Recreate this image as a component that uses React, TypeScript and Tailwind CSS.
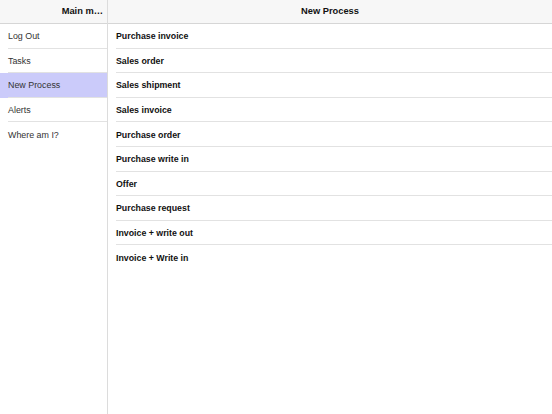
import React from "react";

const left = ["Log Out", "Tasks", "New Process", "Alerts", "Where am I?"];
const right = [
  "Purchase invoice",
  "Sales order",
  "Sales shipment",
  "Sales invoice",
  "Purchase order",
  "Purchase write in",
  "Offer",
  "Purchase request",
  "Invoice + write out",
  "Invoice + Write in",
];

export default function App() {
  return (
    <div
      className="flex h-[414px] w-[552px] overflow-hidden bg-white"
      style={{ fontFamily: '"Liberation Sans", Arial, sans-serif' }}
    >
      <div className="flex w-[108px] shrink-0 flex-col border-r border-[#dcdcdc]">
        <div className="flex h-[24px] items-center justify-end border-b border-[#d6d6d6] bg-[#f7f7f7] pr-[4px] text-[9.3px] font-bold text-[#111]">
          Main m…
        </div>
        <div className="flex flex-col">
          {left.map((t, i) => (
            <div
              key={t}
              className={`${t === "New Process" ? "bg-[#cbcbfa]" : "bg-white"} pl-[8px]`}
            >
              <div
                className={`flex h-[24.6px] items-center pt-[2px] text-[8.9px] text-[#333] ${
                  i < left.length - 1 ? "border-b border-[#e2e2e2]" : ""
                }`}
              >
                {t}
              </div>
            </div>
          ))}
        </div>
      </div>
      <div className="flex flex-1 flex-col">
        <div className="flex h-[24px] items-center justify-center border-b border-[#d6d6d6] bg-[#f7f7f7] text-[9.3px] font-bold text-[#111]">
          New Process
        </div>
        <div className="flex flex-col pl-[8px]">
          {right.map((t, i) => (
            <div
              key={t}
              className={`flex h-[24.6px] items-center pt-[2px] text-[8.8px] font-bold text-[#111] ${
                i < right.length - 1 ? "border-b border-[#e2e2e2]" : ""
              }`}
            >
              {t}
            </div>
          ))}
        </div>
      </div>
    </div>
  );
}
